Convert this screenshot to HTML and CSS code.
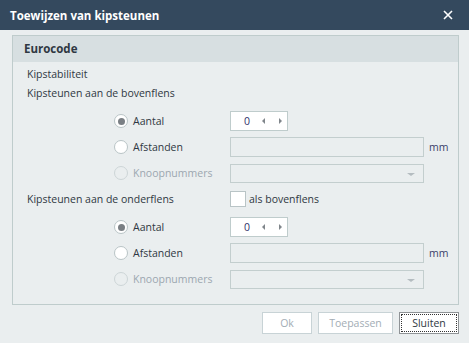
FILE: index.html
```html
<!DOCTYPE html>
<html lang="nl">
  <head>
    <meta charset="UTF-8" />
    <title>Toewijzen van kipsteunen</title>
    <link rel="stylesheet" href="styles.css">
  </head>
  <body>
    <div class="dialog">
      <div class="titlebar">
        <span class="title">Toewijzen van kipsteunen</span>
        <svg class="close" width="10" height="10" viewBox="0 0 10 10">
          <path d="M1 1 L9 9 M9 1 L1 9" stroke="#fff" stroke-width="1.6" />
        </svg>
      </div>

      <div class="content">
        <div class="group">
          <div class="group-header">Eurocode</div>
          <div class="group-body">
            <div class="line">Kipstabiliteit</div>
            <div class="line">Kipsteunen aan de bovenflens</div>

            <div class="opt first">
              <label class="radio"><span class="dot checked"></span>Aantal</label>
              <div class="spin"><span class="val">0</span><span class="arr left"></span><span class="arr right"></span></div>
            </div>
            <div class="opt">
              <label class="radio"><span class="dot"></span>Afstanden</label>
              <div class="field"></div>
              <span class="unit">mm</span>
            </div>
            <div class="opt">
              <label class="radio disabled"><span class="dot"></span>Knoopnummers</label>
              <div class="field combo"><span class="caret"></span></div>
            </div>

            <div class="check-row">
              <span class="check-label">Kipsteunen aan de onderflens</span>
              <span class="box"></span>
              <span>als bovenflens</span>
            </div>

            <div class="opt first">
              <label class="radio"><span class="dot checked"></span>Aantal</label>
              <div class="spin"><span class="val">0</span><span class="arr left"></span><span class="arr right"></span></div>
            </div>
            <div class="opt">
              <label class="radio"><span class="dot"></span>Afstanden</label>
              <div class="field"></div>
              <span class="unit">mm</span>
            </div>
            <div class="opt">
              <label class="radio disabled"><span class="dot"></span>Knoopnummers</label>
              <div class="field combo"><span class="caret"></span></div>
            </div>
          </div>
        </div>

        <div class="buttons">
          <button class="btn off ok">Ok</button>
          <button class="btn off apply">Toepassen</button>
          <button class="btn focus close-btn"><span>Sluiten</span></button>
        </div>
      </div>
    </div>
  </body>
</html>
```

FILE: styles.css
```css
* {
  margin: 0;
  padding: 0;
  box-sizing: border-box;
  font-family: "Open Sans", "Noto Sans", sans-serif;
}

body {
  width: 469px;
  height: 343px;
  overflow: hidden;
  background: #eaeeef;
  color: #2f3842;
  font-size: 10.5px;
}

.titlebar {
  height: 30px;
  background: #34495e;
  display: flex;
  align-items: center;
  justify-content: space-between;
  padding: 0 16px 0 10px;
}

.title {
  color: #fff;
  font-weight: bold;
  font-size: 11.5px;
}

.content {
  padding: 5px 10px 0 12px;
}

.group {
  height: 270px;
  border: 1px solid #bfcccc;
}

.group-header {
  height: 26px;
  background: #d7dfe1;
  font-weight: bold;
  font-size: 11.5px;
  padding-left: 11px;
  line-height: 25px;
}

.group-body {
  padding: 3px 0 0 14px;
}

.line {
  height: 19px;
  line-height: 19px;
}

.opt {
  display: flex;
  align-items: center;
  height: 20px;
  margin-top: 6px;
  padding-left: 87px;
}

.opt.first {
  margin-top: 8px;
}

.radio {
  width: 116px;
  display: flex;
  align-items: center;
  gap: 5px;
}

.radio.disabled {
  color: #9ca7b0;
}

.dot {
  width: 14px;
  height: 14px;
  border-radius: 50%;
  border: 1px solid #b9c4c6;
  background: #fff;
  display: flex;
  align-items: center;
  justify-content: center;
}

.dot.checked::after {
  content: "";
  width: 7px;
  height: 7px;
  border-radius: 50%;
  background: #7a7f84;
}

.radio.disabled .dot {
  background: transparent;
  border-color: #cdd5d7;
}

/* teller met pijltjes */
.spin {
  width: 58px;
  height: 20px;
  background: #fff;
  border: 1px solid #bfcccc;
  display: flex;
  align-items: center;
  padding-left: 13px;
  color: #2f2f6a;
}

.spin .val {
  width: 18px;
}

.spin .arr {
  width: 0;
  height: 0;
  border-top: 3px solid transparent;
  border-bottom: 3px solid transparent;
}

.spin .left {
  border-right: 3px solid #80868b;
  margin-right: 14px;
}

.spin .right {
  border-left: 3px solid #80868b;
}

.field {
  width: 194px;
  height: 20px;
  border: 1px solid #c3cece;
  position: relative;
}

.combo {
  height: 19px;
}

.caret {
  position: absolute;
  right: 8px;
  top: 8px;
  border-left: 4px solid transparent;
  border-right: 4px solid transparent;
  border-top: 3px solid #b4bcc0;
}

.unit {
  margin-left: 5px;
  color: #3a3f6a;
}

.check-row {
  display: flex;
  align-items: center;
  height: 20px;
  margin-top: 6px;
}

.check-label {
  width: 203px;
}

.box {
  width: 16px;
  height: 16px;
  background: #fff;
  border: 1px solid #b9c4c6;
  margin-right: 3px;
}

.buttons {
  display: flex;
  justify-content: flex-end;
  gap: 6px;
  margin-top: 7px;
}

.btn {
  height: 22px;
  background: #fff;
  border: 1px solid #c8d3d6;
  font-size: 10.5px;
  color: #2f3842;
}

.btn.off {
  color: #a3adb5;
}

.ok {
  width: 50px;
}

.apply {
  width: 75px;
}

.close-btn {
  width: 60px;
  border-color: #8f9396;
  padding: 1px;
}

.close-btn span {
  display: block;
  height: 100%;
  border: 1px dotted #333;
  line-height: 16px;
}
```
